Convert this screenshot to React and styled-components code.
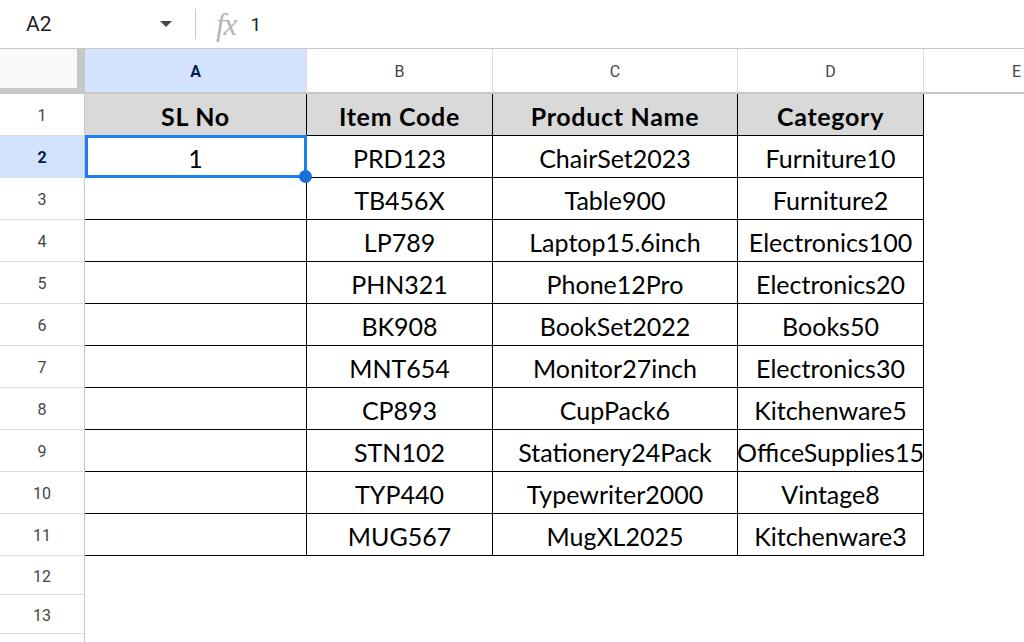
import React from 'react';
import styled, { createGlobalStyle } from 'styled-components';

const GlobalStyle = createGlobalStyle`
  html, body {
    margin: 0;
    padding: 0;
    background: #ffffff;
    overflow: hidden;
  }
  * {
    box-sizing: border-box;
  }
`;

const columns = ['A', 'B', 'C', 'D', 'E'];
const colWidths = '85px 222px 186px 245px 186px 186px';

const headers = ['SL No', 'Item Code', 'Product Name', 'Category'];
const rows = [
  ['1', 'PRD123', 'ChairSet2023', 'Furniture10'],
  ['', 'TB456X', 'Table900', 'Furniture2'],
  ['', 'LP789', 'Laptop15.6inch', 'Electronics100'],
  ['', 'PHN321', 'Phone12Pro', 'Electronics20'],
  ['', 'BK908', 'BookSet2022', 'Books50'],
  ['', 'MNT654', 'Monitor27inch', 'Electronics30'],
  ['', 'CP893', 'CupPack6', 'Kitchenware5'],
  ['', 'STN102', 'Stationery24Pack', 'OfficeSupplies15'],
  ['', 'TYP440', 'Typewriter2000', 'Vintage8'],
  ['', 'MUG567', 'MugXL2025', 'Kitchenware3'],
];

const Page = styled.div`
  width: 1024px;
  height: 642px;
  overflow: hidden;
  background: #fff;
  font-family: Roboto, 'Liberation Sans', sans-serif;
`;

const FormulaBar = styled.div`
  display: flex;
  align-items: center;
  height: 49px;
  border-bottom: 1px solid #c7c7c7;
  color: #1f1f1f;
`;

const NameBox = styled.div`
  display: flex;
  align-items: center;
  justify-content: space-between;
  width: 180px;
  padding: 0 8px 0 26px;
  font-size: 21px;
`;

const Caret = styled.span`
  width: 0;
  height: 0;
  border-left: 6px solid transparent;
  border-right: 6px solid transparent;
  border-top: 6px solid #444746;
`;

const Divider = styled.span`
  width: 1px;
  height: 30px;
  margin: 0 20px 0 15px;
  background: #c7c7c7;
`;

const Fx = styled.span`
  font-family: 'Liberation Serif', serif;
  font-style: italic;
  font-size: 31px;
  color: #b4b4b4;
  margin-right: 14px;
  letter-spacing: -1px;
  line-height: 1;
`;

const FormulaText = styled.span`
  font-size: 19px;
`;

const Grid = styled.div`
  display: grid;
  grid-template-columns: ${colWidths};
  grid-template-rows: 45px repeat(11, 42px) repeat(3, 39px);
`;

const Corner = styled.div`
  background: #f8f9fa;
  border-right: 8px solid #c7c7c7;
  border-bottom: 6px solid #c7c7c7;
`;

const ColHeader = styled.div`
  display: flex;
  align-items: center;
  justify-content: center;
  padding-top: 2px;
  font-size: 16px;
  background: ${(p) => (p.$active ? '#d3e3fd' : '#fff')};
  color: ${(p) => (p.$active ? '#041e49' : '#444746')};
  font-weight: ${(p) => (p.$active ? 700 : 400)};
  border-right: 1px solid #dadce0;
  border-bottom: 2px solid #c7c7c7;
`;

const RowHeader = styled.div`
  display: flex;
  align-items: center;
  justify-content: center;
  padding-top: 2px;
  font-size: 16px;
  background: ${(p) => (p.$active ? '#d3e3fd' : '#fff')};
  color: ${(p) => (p.$active ? '#041e49' : '#444746')};
  font-weight: ${(p) => (p.$active ? 700 : 400)};
  border-right: 1px solid #c7c7c7;
  border-bottom: 1px solid #dadce0;
`;

const Cell = styled.div`
  position: relative;
  display: flex;
  align-items: center;
  justify-content: center;
  padding-top: 2px;
  white-space: nowrap;
  font-family: Lato, 'Liberation Sans', sans-serif;
  font-size: 25px;
  color: #000;
  background: ${(p) => (p.$head ? '#d9d9d9' : '#fff')};
  font-weight: ${(p) => (p.$head ? 700 : 400)};
  letter-spacing: ${(p) => (p.$head ? '0.7px' : '0')};
  border-right: ${(p) => (p.$table ? '1.5px solid #000' : 'none')};
  border-bottom: ${(p) => (p.$table ? '1.5px solid #000' : 'none')};
`;

const Selection = styled.div`
  position: absolute;
  z-index: 2;
  left: 0;
  top: -1px;
  right: -1px;
  bottom: -1px;
  border: 3px solid #1a7ff0;
  pointer-events: none;
`;

const Handle = styled.span`
  position: absolute;
  right: -8px;
  bottom: -8px;
  width: 13px;
  height: 13px;
  border-radius: 50%;
  background: #1a6fd8;
`;

export default function App() {
  return (
    <Page>
      <GlobalStyle />
      <FormulaBar>
        <NameBox>
          A2
          <Caret />
        </NameBox>
        <Divider />
        <Fx>fx</Fx>
        <FormulaText>1</FormulaText>
      </FormulaBar>
      <Grid>
        <Corner />
        {columns.map((c) => (
          <ColHeader key={c} $active={c === 'A'}>
            {c}
          </ColHeader>
        ))}

        <RowHeader>1</RowHeader>
        {headers.map((h) => (
          <Cell key={h} $head $table>
            {h}
          </Cell>
        ))}
        <Cell />

        {rows.map((r, i) => (
          <React.Fragment key={i}>
            <RowHeader $active={i === 0}>{i + 2}</RowHeader>
            {r.map((v, j) => (
              <Cell key={j} $table>
                {v}
                {i === 0 && j === 0 && (
                  <Selection>
                    <Handle />
                  </Selection>
                )}
              </Cell>
            ))}
            <Cell />
          </React.Fragment>
        ))}

        {['12', '13', ''].map((n, k) => (
          <React.Fragment key={k}>
            <RowHeader>{n}</RowHeader>
            <Cell />
            <Cell />
            <Cell />
            <Cell />
            <Cell />
          </React.Fragment>
        ))}
      </Grid>
    </Page>
  );
}
